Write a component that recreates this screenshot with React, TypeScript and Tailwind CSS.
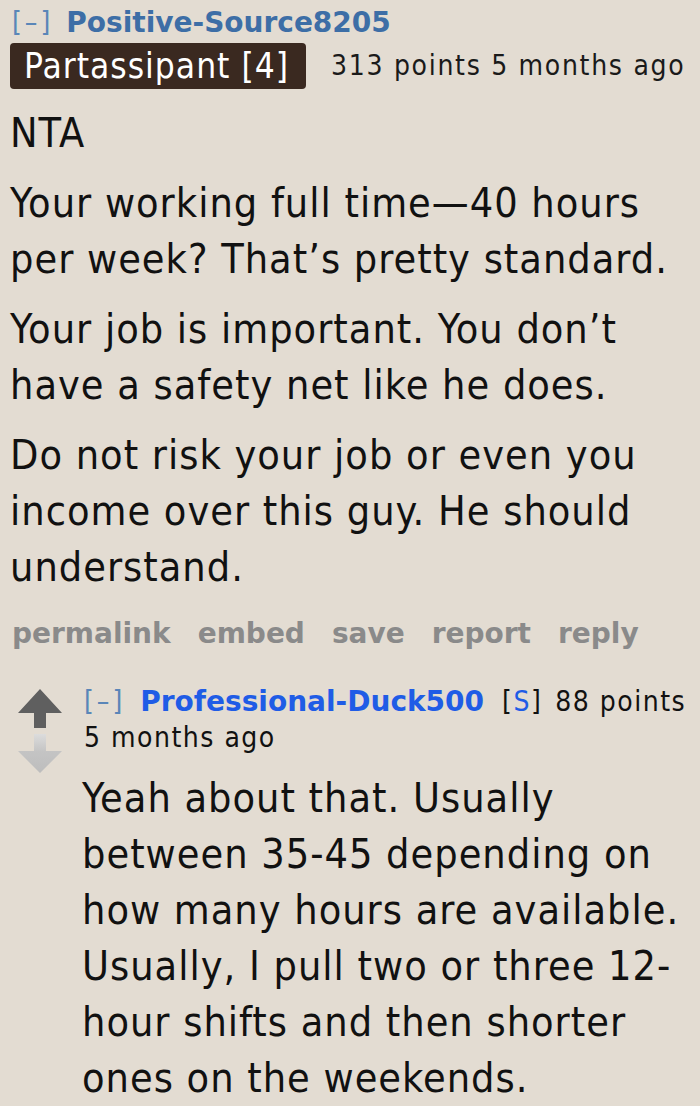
const cond = { fontFamily: '"DejaVu Sans Condensed", "DejaVu Sans", Verdana, sans-serif' };
const wide = { fontFamily: '"DejaVu Sans", Verdana, sans-serif' };

function UpArrow({ color }: { color: string }) {
  return (
    <svg width="44" height="39" viewBox="0 0 44 39">
      <path d="M22 0 L44 24 L28 24 L28 39 L16 39 L16 24 L0 24 Z" fill={color} />
    </svg>
  );
}

function DownArrow() {
  return (
    <svg width="44" height="39" viewBox="0 0 44 39">
      <defs>
        <linearGradient id="fade" x1="0" y1="0" x2="0" y2="1">
          <stop offset="0" stopColor="#dcdcdc" />
          <stop offset="0.45" stopColor="#c4c4c4" />
          <stop offset="1" stopColor="#bdbdbd" />
        </linearGradient>
      </defs>
      <path d="M16 0 L28 0 L28 17 L44 17 L22 39 L0 17 L16 17 Z" fill="url(#fade)" />
    </svg>
  );
}

const actions = ['permalink', 'embed', 'save', 'report', 'reply'];

export default function App() {
  return (
    <div className="w-[700px] h-[1106px] overflow-hidden bg-[#e3dcd2] text-[#111]" style={cond}>
      <div className="pl-[10px] pt-[6px]">
        <div className="flex items-baseline gap-[13px] leading-[34px] pl-[2px]">
          <span className="text-[28px] tracking-[3px] text-[#5a86b8]">[–]</span>
          <span className="text-[28px] font-bold text-[#3d6ea6]" style={wide}>Positive-Source8205</span>
        </div>
        <div className="flex items-center gap-[25px] mt-[3px]">
          <span className="bg-[#3a2920] text-white rounded-[4px] text-[35px] tracking-[1px] leading-[46px] pl-[14px] pr-[17px]">
            Partassipant [4]
          </span>
          <span className="text-[28px] tracking-[1.7px] text-[#1a1a1a]">313 points 5 months ago</span>
        </div>
        <div className="text-[41px] tracking-[1px] leading-[56px] mt-[16px] pr-[10px]">
          <p>NTA</p>
          <p className="mt-[14px]">Your working full time—40 hours per week? That’s pretty standard.</p>
          <p className="mt-[14px]">Your job is important. You don’t have a safety net like he does.</p>
          <p className="mt-[14px]">Do not risk your job or even you income over this guy. He should understand.</p>
        </div>
        <div className="flex gap-[27px] mt-[19px] pl-[2px] text-[28px] leading-[40px] font-bold text-[#8a8a8a]" style={wide}>
          {actions.map((a) => (
            <span key={a}>{a}</span>
          ))}
        </div>
        <div className="flex mt-[30px]">
          <div className="flex flex-col items-center gap-[6px] w-[44px] ml-[8px] pt-[5px]">
            <UpArrow color="#5f5f5f" />
            <DownArrow />
          </div>
          <div className="ml-[20px] flex-1">
            <div className="text-[28px] tracking-[1.5px] leading-[36px] pl-[2px]">
              <span className="text-[#5a86b8] tracking-[3px] mr-[15px]">[–]</span>
              <span className="font-bold text-[#1f5ce6] tracking-normal mr-[18px]" style={wide}>Professional-Duck500</span>
              <span className="mr-[13px]">
                [<span className="text-[#1f5ce6]">S</span>]
              </span>
              88 points 5 months ago
            </div>
            <div className="text-[41px] tracking-[1px] leading-[56px] mt-[14px]">
              Yeah about that. Usually between 35-45 depending on how many hours are available. Usually, I pull two or three 12-hour shifts and then shorter ones on the weekends.
            </div>
          </div>
        </div>
      </div>
    </div>
  );
}
